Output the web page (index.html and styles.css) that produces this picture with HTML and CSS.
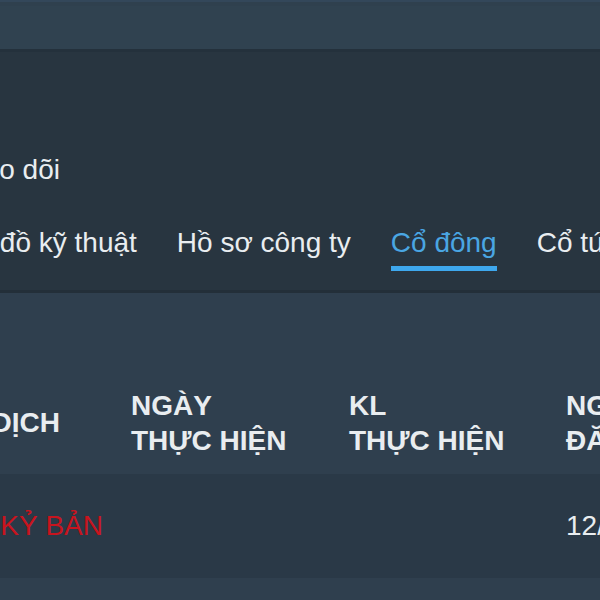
FILE: index.html
```html
<!DOCTYPE html>
<html lang="vi">
<head>
<meta charset="utf-8">
<link rel="stylesheet" href="styles.css">
</head>
<body>
<div class="topbar"></div>
<div class="panel">
  <div class="follow">Theo dõi</div>
  <div class="tabs">
    <div class="tab">Biểu đồ kỹ thuật</div>
    <div class="tab">Hồ sơ công ty</div>
    <div class="tab active">Cổ đông</div>
    <div class="tab">Cổ tức</div>
  </div>
</div>
<div class="table">
  <div class="thead">
    <div class="cell first">GIAO DỊCH</div>
    <div class="cell">NGÀY<br>THỰC HIỆN</div>
    <div class="cell">KL<br>THỰC HIỆN</div>
    <div class="cell">NGÀY<br>ĐĂNG KÝ</div>
  </div>
  <div class="trow">
    <div class="cell first red">ĐĂNG KỶ BẢN</div>
    <div class="cell"></div>
    <div class="cell"></div>
    <div class="cell">12/05/2023</div>
  </div>
  <div class="tfoot"></div>
</div>
</body>
</html>
```
FILE: styles.css
```css
html, body {
  margin: 0;
  padding: 0;
  width: 600px;
  height: 600px;
  overflow: hidden;
  background: #283540;
  font-family: "Liberation Sans", Arial, sans-serif;
  color: #e9edf0;
}
.topbar {
  height: 49px;
  background: #304250;
  box-shadow: inset 0 2px 0 #33475a, inset 0 6px 0 #2f404e;
  border-bottom: 3px solid #24313c;
}
.panel {
  height: 238px;
  background: #283540;
  overflow: hidden;
  border-bottom: 3px solid #232f39;
}
.follow {
  font-size: 28px;
  line-height: 34px;
  margin-top: 101px;
  margin-left: -49px;
  white-space: nowrap;
}
.tabs {
  display: flex;
  gap: 40px;
  margin-top: 39px;
  margin-left: -64px;
  white-space: nowrap;
}
.tab {
  font-size: 28px;
  line-height: 34px;
  padding-bottom: 6px;
  border-bottom: 5px solid transparent;
}
.tab.active {
  color: #4aa6e3;
  border-bottom-color: #3ea8ee;
}
.table {
  overflow: hidden;
}
.thead, .trow {
  display: grid;
  grid-template-columns: 131px 218px 217px 200px;
  white-space: nowrap;
}
.thead {
  height: 181px;
  background: #2f3f4e;
  font-weight: bold;
  font-size: 28px;
  line-height: 35px;
  align-items: center;
  padding-top: 78px;
  box-sizing: border-box;
}
.trow {
  height: 104px;
  background: #2a3947;
  font-size: 28px;
  align-items: center;
}
.cell.first {
  display: flex;
  justify-content: flex-end;
  padding-right: 71px;
}
.trow .cell.first {
  padding-right: 28px;
}
.red {
  color: #c8141e;
}
.tfoot {
  height: 40px;
  background: #2f3f4e;
}
```
